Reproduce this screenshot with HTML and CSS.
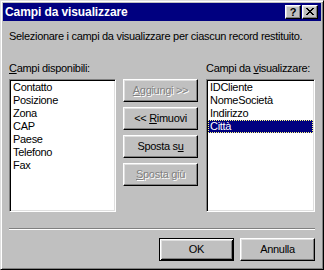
FILE: index.html
```html
<!DOCTYPE html>
<html lang="it">
<head>
<meta charset="utf-8">
<title>Campi da visualizzare</title>
<link rel="stylesheet" href="styles.css">
</head>
<body>
<div class="dialog">
  <div class="titlebar">
    <span class="title">Campi da visualizzare</span>
    <div class="caption-buttons">
      <span class="cbtn help">?</span>
      <span class="cbtn close">
        <svg width="8" height="7" viewBox="0 0 8 7" shape-rendering="crispEdges"><path fill="#000" d="M0 0h2v1h-2z M6 0h2v1h-2z M1 1h2v1h-2z M5 1h2v1h-2z M2 2h4v1h-4z M3 3h2v1h-2z M2 4h4v1h-4z M1 5h2v1h-2z M5 5h2v1h-2z M0 6h2v1h-2z M6 6h2v1h-2z"/></svg>
      </span>
    </div>
  </div>
  <div class="content">
    <p class="prompt">Selezionare i campi da visualizzare per ciascun record restituito.</p>
    <div class="columns">
      <div class="col col-left">
        <div class="label"><u>C</u>ampi disponibili:</div>
        <ul class="list">
          <li>Contatto</li>
          <li>Posizione</li>
          <li>Zona</li>
          <li>CAP</li>
          <li>Paese</li>
          <li>Telefono</li>
          <li>Fax</li>
        </ul>
      </div>
      <div class="col col-mid">
        <div class="btn disabled"><span><u>A</u>ggiungi &gt;&gt;</span></div>
        <div class="btn"><span>&lt;&lt; <u>R</u>imuovi</span></div>
        <div class="btn"><span>Sposta s<u>u</u></span></div>
        <div class="btn disabled"><span><u>S</u>posta giù</span></div>
      </div>
      <div class="col col-right">
        <div class="label">Campi da <u>v</u>isualizzare:</div>
        <ul class="list">
          <li>IDCliente</li>
          <li>NomeSocietà</li>
          <li>Indirizzo</li>
          <li class="selected">Città</li>
        </ul>
      </div>
    </div>
    <div class="separator"></div>
    <div class="footer">
      <div class="btn default"><span>OK</span></div>
      <div class="btn"><span>Annulla</span></div>
    </div>
  </div>
</div>
</body>
</html>
```
FILE: styles.css
```css
* { box-sizing: border-box; }
html, body { margin: 0; padding: 0; }
body {
  background: #c0c0c0;
  font-family: "Liberation Sans", Arial, sans-serif;
  font-size: 11px;
  letter-spacing: -0.3px;
  color: #000;
}
.dialog {
  width: 324px;
  height: 270px;
  background: #c0c0c0;
  border: 1px solid;
  border-color: #dfdfdf #000 #000 #dfdfdf;
  box-shadow: inset 1px 1px 0 #fff, inset -1px -1px 0 #808080;
  padding: 2px;
  display: flex;
  flex-direction: column;
}
.titlebar {
  height: 18px;
  flex: none;
  background: #000080;
  display: flex;
  align-items: center;
  justify-content: space-between;
  padding: 0 3px 0 2px;
}
.title {
  color: #fff;
  font-weight: bold;
  font-size: 12px;
  letter-spacing: -0.1px;
  line-height: 16px;
  white-space: nowrap;
}
.caption-buttons {
  display: flex;
  gap: 1px;
}
.cbtn {
  width: 16px;
  height: 14px;
  background: #c0c0c0;
  border: 1px solid;
  border-color: #fff #000 #000 #fff;
  box-shadow: inset -1px -1px 0 #808080, inset 1px 1px 0 #dfdfdf;
  display: flex;
  align-items: center;
  justify-content: center;
}
.help {
  font-weight: bold;
  font-size: 11px;
  line-height: 11px;
  letter-spacing: 0;
}
.close svg { display: block; margin-top: -1px; }
.content {
  flex: 1;
  padding: 9px 6px 0;
  display: flex;
  flex-direction: column;
}
.prompt {
  margin: 0 0 19px;
  line-height: 13px;
  white-space: nowrap;
}
.columns {
  display: flex;
}
.col-left { width: 107px; }
.col-mid {
  width: 75px;
  margin: 0 8px 0 7px;
  padding-top: 17px;
  display: flex;
  flex-direction: column;
  gap: 5px;
}
.col-right { width: 109px; }
.label {
  line-height: 13px;
  margin-bottom: 4px;
  white-space: nowrap;
}
.list {
  margin: 0;
  list-style: none;
  height: 133px;
  background: #fff;
  border: 1px solid;
  border-color: #808080 #fff #fff #808080;
  box-shadow: inset 1px 1px 0 #000, inset -1px -1px 0 #dfdfdf;
  padding: 1px;
}
.list li {
  line-height: 11px;
  height: 13px;
  border: 1px solid transparent;
  padding: 0 1px;
  white-space: nowrap;
}
.list li.selected {
  background: #000080;
  color: #fff;
  border: 1px dotted #ffff80;
}
.btn {
  width: 75px;
  height: 23px;
  background: #c0c0c0;
  border: 1px solid;
  border-color: #fff #000 #000 #fff;
  box-shadow: inset -1px -1px 0 #808080, inset 1px 1px 0 #dfdfdf;
  display: flex;
  align-items: center;
  justify-content: center;
  line-height: 13px;
  white-space: nowrap;
}
.btn.disabled {
  color: #808080;
  text-shadow: 1px 1px 0 #fff;
}
.btn.default {
  border-color: #000;
  box-shadow: inset 1px 1px 0 #fff, inset -1px -1px 0 #000, inset 2px 2px 0 #dfdfdf, inset -2px -2px 0 #808080;
}
.separator {
  height: 2px;
  margin-top: 16px;
  border-top: 1px solid #808080;
  border-bottom: 1px solid #fff;
}
.footer {
  display: flex;
  justify-content: flex-end;
  gap: 6px;
  margin-top: 8px;
}
```
